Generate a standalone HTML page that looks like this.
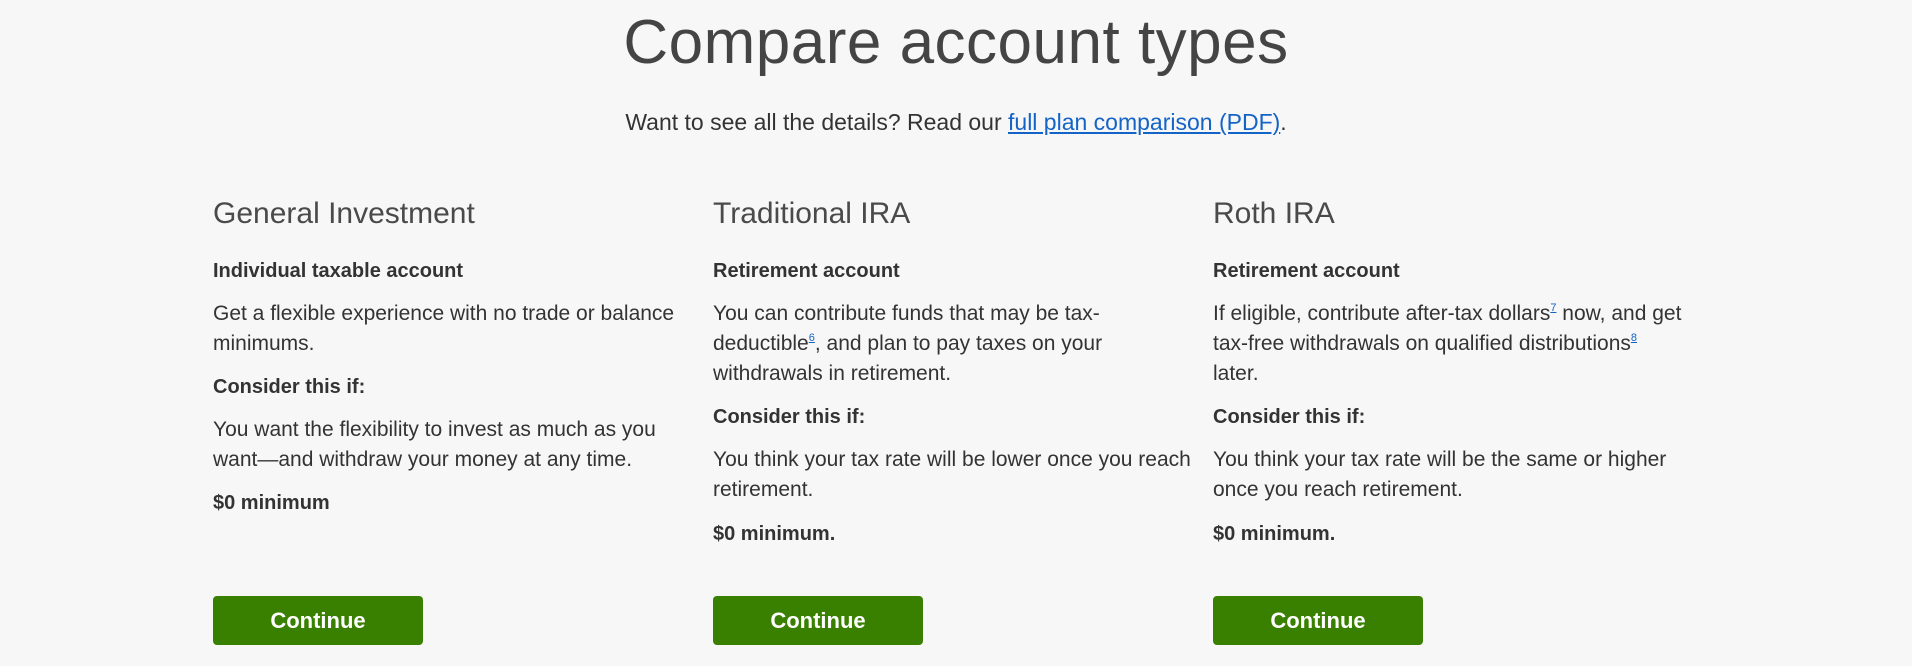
<!DOCTYPE html>
<html><head><meta charset="utf-8"><style>
html,body{margin:0;padding:0;background:#f7f7f7;width:1912px;height:666px;overflow:hidden;font-family:"Liberation Sans",sans-serif;color:#333}
h1{position:absolute;left:0;width:1912px;text-align:center;top:6px;margin:0;font-weight:300;font-size:62px;line-height:74px;color:#444;letter-spacing:0.5px}
.sub{position:absolute;left:0;width:1912px;text-align:center;top:108px;font-size:23px;line-height:28px;color:#333}
.sub a{color:#1463c6;text-decoration:underline}
.col{position:absolute;top:0;width:490px}
h2{position:absolute;top:194px;margin:0;font-weight:300;font-size:30px;line-height:40px;color:#4a4a4a;white-space:nowrap}
.b{position:absolute;font-weight:bold;font-size:20px;line-height:30px;white-space:nowrap}
.p{position:absolute;font-size:21px;line-height:30px;white-space:nowrap}
sup{font-size:11px;color:#1463c6;text-decoration:underline;vertical-align:9px;line-height:0}
.btn{position:absolute;top:596px;width:210px;height:49px;background:#3a8000;border-radius:4px;color:#fff;font-weight:bold;font-size:22px;line-height:49px;text-align:center}
</style></head><body>
<h1>Compare account types</h1>
<div class="sub">Want to see all the details? Read our <a>full plan comparison (PDF)</a>.</div>

<div class="col" style="left:213px">
<h2>General Investment</h2>
<div class="b" style="top:256px">Individual taxable account</div>
<div class="p" style="top:299px">Get a flexible experience with no trade or balance<br>minimums.</div>
<div class="b" style="top:372px">Consider this if:</div>
<div class="p" style="top:415px">You want the flexibility to invest as much as you<br>want—and withdraw your money at any time.</div>
<div class="b" style="top:488px">$0 minimum</div>
<div class="btn" style="left:0">Continue</div>
</div>

<div class="col" style="left:713px">
<h2>Traditional IRA</h2>
<div class="b" style="top:256px">Retirement account</div>
<div class="p" style="top:299px">You can contribute funds that may be tax-<br>deductible<sup>6</sup>, and plan to pay taxes on your<br>withdrawals in retirement.</div>
<div class="b" style="top:402px">Consider this if:</div>
<div class="p" style="top:445px">You think your tax rate will be lower once you reach<br>retirement.</div>
<div class="b" style="top:519px">$0 minimum.</div>
<div class="btn" style="left:0">Continue</div>
</div>

<div class="col" style="left:1213px">
<h2>Roth IRA</h2>
<div class="b" style="top:256px">Retirement account</div>
<div class="p" style="top:299px">If eligible, contribute after-tax dollars<sup>7</sup> now, and get<br>tax-free withdrawals on qualified distributions<sup>8</sup><br>later.</div>
<div class="b" style="top:402px">Consider this if:</div>
<div class="p" style="top:445px">You think your tax rate will be the same or higher<br>once you reach retirement.</div>
<div class="b" style="top:519px">$0 minimum.</div>
<div class="btn" style="left:0">Continue</div>
</div>
</body></html>
